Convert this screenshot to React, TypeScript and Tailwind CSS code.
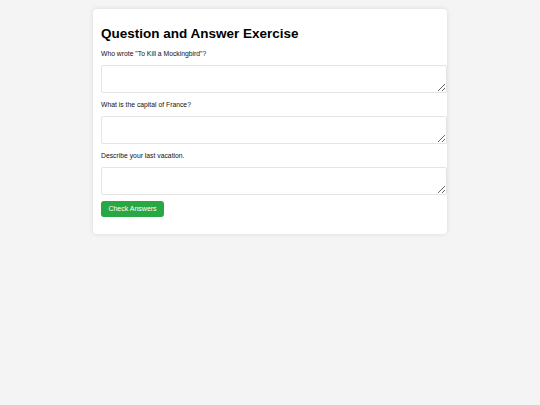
import React, { useState } from "react";

const questions = [
  'Who wrote "To Kill a Mockingbird"?',
  "What is the capital of France?",
  "Describe your last vacation.",
];

const App = () => {
  const [answers, setAnswers] = useState<string[]>(["", "", ""]);

  return (
    <div
      className="min-h-[405px] w-full bg-[#f4f4f4] pt-[9px]"
      style={{ fontFamily: '"Liberation Sans", Arial, sans-serif' }}
    >
      <div className="mx-auto w-[354px] rounded-[4px] bg-white px-[8px] pt-[15px] pb-[17px] shadow-[0_0_5px_rgba(0,0,0,0.1)]">
        <h1 className="text-[13.5px] leading-[19px] font-bold text-black">Question and Answer Exercise</h1>
        <div className="mt-[6px]">
          {questions.map((q, i) => (
            <div key={i} className="mb-[7px]">
              <label className="block text-[6.8px] leading-[10px] text-[#111]">{q}</label>
              <textarea
                className="mt-[6px] block h-[28px] w-[346px] rounded-[2px] border border-[#e4e4e4] bg-white p-[4px] text-[7px] outline-none"
                value={answers[i]}
                onChange={(e) => {
                  const next = [...answers];
                  next[i] = e.target.value;
                  setAnswers(next);
                }}
              />
            </div>
          ))}
        </div>
        <button className="-mt-[1px] block h-[16px] w-[63px] rounded-[3px] bg-[#28a745] text-[7px] leading-[16px] text-white">
          Check Answers
        </button>
      </div>
    </div>
  );
};

export default App;
